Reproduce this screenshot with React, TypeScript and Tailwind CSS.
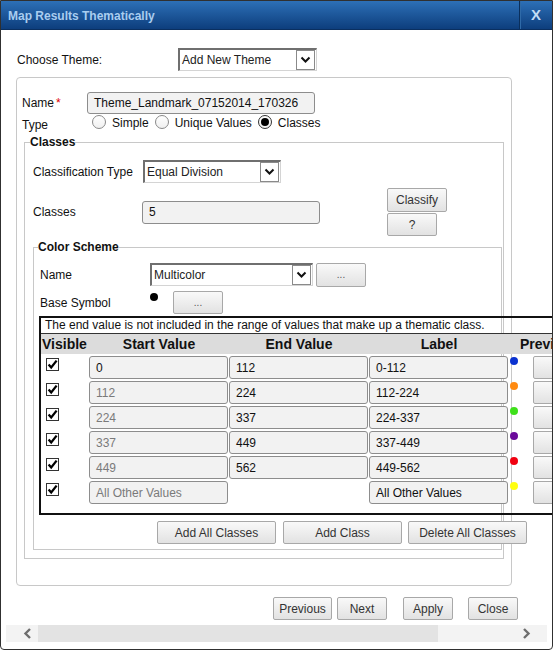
import React from "react";

function Btn({ cls, children }: { cls: string; children?: React.ReactNode }) {
  return (
    <div
      className={`flex shrink-0 items-center justify-center rounded-[2px] border border-[#a8a8a8] bg-gradient-to-b from-[#f9f9f9] to-[#e2e2e2] text-[#333] ${cls}`}
    >
      {children}
    </div>
  );
}

function Chevron() {
  return (
    <svg width="11" height="8" viewBox="0 0 11 8">
      <path d="M1.5 1.5 L5.5 5.5 L9.5 1.5" stroke="#111" strokeWidth="2" fill="none" />
    </svg>
  );
}

function Select({ value, cls }: { value: string; cls: string }) {
  return (
    <div
      className={`flex shrink-0 border-l-2 border-t-2 border-r border-b border-l-[#6f6f6f] border-t-[#6f6f6f] border-r-[#d4d4d4] border-b-[#d4d4d4] bg-white ${cls}`}
    >
      <div className="flex-1 pl-[2px] flex items-center text-[#222] overflow-hidden whitespace-nowrap">{value}</div>
      <div className="w-[19px] border border-[#8a8a8a] flex items-center justify-center bg-white mr-[1px]">
        <Chevron />
      </div>
    </div>
  );
}

function Input({ value, cls, gray }: { value: string; cls: string; gray?: boolean }) {
  return (
    <div
      className={`flex shrink-0 items-center overflow-hidden whitespace-nowrap rounded-[3px] border border-[#8d8d8d] bg-[#f2f2f2] pl-[6px] ${
        gray ? "text-[#7a7a7a]" : "text-[#111]"
      } ${cls}`}
    >
      {value}
    </div>
  );
}

function Radio({ checked }: { checked?: boolean }) {
  return (
    <div
      className={`flex h-[14px] w-[14px] shrink-0 items-center justify-center rounded-full border bg-gradient-to-b from-white to-[#f0f0f0] ${
        checked ? "border-[#333]" : "border-[#8a8a8a]"
      }`}
    >
      {checked && <div className="h-[8px] w-[8px] rounded-full bg-black" />}
    </div>
  );
}

function Check() {
  return (
    <div className="flex h-[13px] w-[13px] items-center justify-center border border-[#333] bg-white">
      <svg width="11" height="11" viewBox="0 0 11 11">
        <path d="M1.6 5.4 L4.2 8.4 L9.6 1.6" stroke="#000" strokeWidth="2.3" fill="none" />
      </svg>
    </div>
  );
}

const rows = [
  { s: "0", e: "112", l: "0-112", c: "bg-[#0a32d0]", g: false },
  { s: "112", e: "224", l: "112-224", c: "bg-[#ff8a10]", g: true },
  { s: "224", e: "337", l: "224-337", c: "bg-[#3ee01a]", g: true },
  { s: "337", e: "449", l: "337-449", c: "bg-[#6a0a9a]", g: true },
  { s: "449", e: "562", l: "449-562", c: "bg-[#f00010]", g: true },
  { s: "All Other Values", e: "", l: "All Other Values", c: "bg-[#ffff10]", g: true },
];

export default function App() {
  return (
    <div className="flex h-[650px] w-[553px] flex-col overflow-hidden rounded-b-[4px] border border-[#303030] bg-white font-['Liberation_Sans',Arial,sans-serif] text-[12px] leading-[14px] text-[#111]">
      {/* Title bar */}
      <div className="flex h-[29px] shrink-0 items-stretch border-b border-[#0a2f60] bg-gradient-to-b from-[#2d70b7] to-[#0d3e7d]">
        <div className="flex flex-1 items-center pl-[7px] pt-[1px] font-bold text-[#a9cdf0]">Map Results Thematically</div>
        <div className="flex w-[33px] items-center justify-center border-l border-[#0a2f5c] shadow-[inset_1px_0_0_#2f6aa8] text-[15px] font-bold text-[#c2ddf5]">
          X
        </div>
      </div>

      {/* Body */}
      <div className="h-[595px] shrink-0 overflow-hidden pl-[15px]">
        {/* Choose theme */}
        <div className="mt-[18px] flex h-[23px] items-center">
          <div className="w-[162px] pl-[1px]">Choose Theme:</div>
          <Select value="Add New Theme" cls="w-[139px] h-[23px]" />
        </div>

        {/* Outer box */}
        <div className="mt-[6px] box-border h-[509px] w-[496px] rounded-[4px] border border-[#c8c8c8] pl-[5px] pt-[14px]">
          <div className="flex h-[22px] items-center">
            <div className="w-[65px]">
              Name<span className="ml-[2px] text-[#e00000]">*</span>
            </div>
            <Input value="Theme_Landmark_07152014_170326" cls="w-[228px] h-[22px]" />
          </div>
          <div className="mt-[1px] flex h-[16px] items-start">
            <div className="mt-[3px] w-[70px]">Type</div>
            <Radio />
            <div className="ml-[6px] mt-[1px]">Simple</div>
            <div className="ml-[6px]">
              <Radio />
            </div>
            <div className="ml-[6px] mt-[1px]">Unique Values</div>
            <div className="ml-[6px]">
              <Radio checked />
            </div>
            <div className="ml-[6px] mt-[1px]">Classes</div>
          </div>

          {/* Classes fieldset */}
          <fieldset className="ml-[2px] mt-[4px] w-[480px] min-w-0 border border-[#c8c8c8] pb-[8px]">
            <legend className="ml-[5px] p-0 font-bold leading-[14px]">Classes</legend>
            <div className="mt-[11px] flex h-[23px] items-center pl-[8px]">
              <div className="w-[110px]">Classification Type</div>
              <Select value="Equal Division" cls="w-[138px] h-[23px]" />
            </div>
            <div className="mt-[5px] flex items-center pl-[8px]">
              <div className="w-[109px]">Classes</div>
              <Input value="5" cls="w-[178px] h-[23px]" />
              <div className="ml-[67px] flex flex-col">
                <Btn cls="w-[60px] h-[24px]">Classify</Btn>
                <Btn cls="w-[50px] h-[23px] mt-[1px]">?</Btn>
              </div>
            </div>

            {/* Color scheme fieldset */}
            <fieldset className="ml-[8px] mt-[4px] w-[469px] min-w-0 border border-[#c8c8c8] pb-[5px]">
              <legend className="ml-[4px] p-0 font-bold leading-[14px]">Color Scheme</legend>
              <div className="mt-[9px] flex h-[24px] items-center pl-[6px]">
                <div className="w-[110px]">Name</div>
                <Select value="Multicolor" cls="w-[163px] h-[23px] self-start" />
                <Btn cls="ml-[3px] w-[50px] h-[24px] text-[10px] text-[#555]">...</Btn>
              </div>
              <div className="mt-[4px] flex h-[23px] items-center pl-[6px]">
                <div className="w-[110px]">Base Symbol</div>
                <div className="h-[23px] w-[23px] shrink-0">
                  <div className="mt-[2px] h-[8px] w-[8px] rounded-full bg-black" />
                </div>
                <Btn cls="w-[50px] h-[23px] text-[10px] text-[#555]">...</Btn>
              </div>

              {/* Table */}
              <div className="ml-[5px] mt-[2px] w-[540px] border-2 border-[#111] pb-[9px]">
                <div className="box-border h-[16px] border-b border-[#333] pl-[4px] leading-[15px] text-[#111] whitespace-nowrap">
                  The end value is not included in the range of values that make up a thematic class.
                </div>
                <div className="flex h-[20px] items-center bg-[#dcdcdc] text-[14px] font-bold text-[#111] whitespace-nowrap">
                  <div className="w-[48px] pl-[1px]">Visible</div>
                  <div className="w-[140px] text-center">Start Value</div>
                  <div className="w-[140px] text-center">End Value</div>
                  <div className="w-[140px] text-center">Label</div>
                  <div className="ml-[11px]">Preview</div>
                </div>
                <div className="mt-[2px] flex flex-col gap-[2px]">
                  {rows.map((r, i) => (
                    <div key={i} className="flex h-[23px] items-start">
                      <div className="w-[48px] shrink-0 pl-[5px] pt-[2px]">
                        <Check />
                      </div>
                      <Input value={r.s} gray={r.g} cls="w-[139px] h-[23px]" />
                      {r.e ? (
                        <Input value={r.e} cls="ml-[1px] w-[139px] h-[23px]" />
                      ) : (
                        <div className="ml-[1px] w-[139px] shrink-0" />
                      )}
                      <Input value={r.l} cls="ml-[1px] w-[139px] h-[23px]" />
                      <div className={`ml-[2px] mt-[1px] h-[8px] w-[8px] shrink-0 rounded-full ${r.c}`} />
                      <Btn cls="ml-[15px] w-[40px] h-[23px]" />
                    </div>
                  ))}
                </div>
              </div>

              <div className="ml-[123px] mt-[6px] flex">
                <Btn cls="w-[119px] h-[23px]">Add All Classes</Btn>
                <Btn cls="ml-[7px] w-[119px] h-[23px]">Add Class</Btn>
                <Btn cls="ml-[6px] w-[119px] h-[23px]">Delete All Classes</Btn>
              </div>
            </fieldset>
          </fieldset>
        </div>

        {/* Bottom buttons */}
        <div className="ml-[257px] mt-[11px] flex">
          <Btn cls="w-[59px] h-[23px]">Previous</Btn>
          <Btn cls="ml-[5px] w-[50px] h-[23px]">Next</Btn>
          <Btn cls="ml-[16px] w-[50px] h-[23px]">Apply</Btn>
          <Btn cls="ml-[15px] w-[50px] h-[23px]">Close</Btn>
        </div>
      </div>

      {/* Scrollbar */}
      <div className="mx-[5px] flex h-[17px] shrink-0 bg-[#f3f3f3]">
        <div className="flex w-[32px] items-center pl-[17px]">
          <svg width="9" height="11" viewBox="0 0 9 11">
            <path d="M7 1 L2.5 5.5 L7 10" stroke="#6e6e6e" strokeWidth="2.4" fill="none" />
          </svg>
        </div>
        <div className="w-[400px] bg-[#e3e3e3]" />
        <div className="flex-1" />
        <div className="flex w-[30px] items-center pl-[5px]">
          <svg width="9" height="11" viewBox="0 0 9 11">
            <path d="M2 1 L6.5 5.5 L2 10" stroke="#6e6e6e" strokeWidth="2.4" fill="none" />
          </svg>
        </div>
      </div>
    </div>
  );
}
